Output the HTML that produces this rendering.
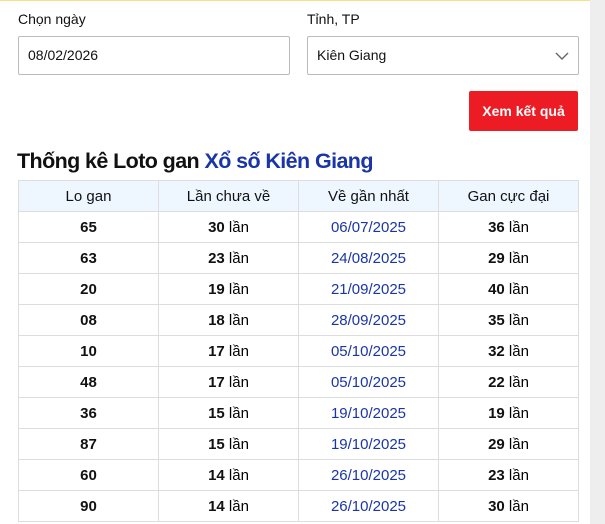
<!DOCTYPE html><html><head><meta charset="utf-8"><style>
body{margin:0;width:605px;height:523px;background:#eee;font-family:"Liberation Sans",sans-serif;overflow:hidden;position:relative}
.pg{position:absolute;left:0;top:0;width:590px;height:523px;background:#fff;border-top:1px solid #f7e08a}
.lb{position:absolute;top:10px;font-size:14px;color:#111}
.in{position:absolute;top:35px;height:39px;width:272px;border:1px solid #bbb;border-radius:2px;box-sizing:border-box;font-size:14px;line-height:37px;padding-left:9px;color:#111}
.btn{position:absolute;left:469px;top:90px;width:109px;height:40px;background:#ed1c24;color:#fff;font-weight:bold;font-size:14px;text-align:center;line-height:40px;border-radius:2px}
h2{position:absolute;left:17px;top:148px;margin:0;font-size:21.5px;letter-spacing:-0.6px;color:#111}
h2 span{color:#1a35a8}
table{position:absolute;left:18px;top:179px;border-collapse:collapse;width:561px;font-size:15px}
td,th{border:1px solid #ddd;height:30px;padding:0;text-align:center;width:25%}
th{background:#eef6ff;font-weight:normal;color:#111;font-size:15px}
td b{color:#111}
td.d{color:#1a35a8}
</style></head><body><div class="pg">
<div class="lb" style="left:18px">Chọn ngày</div>
<div class="lb" style="left:307px">Tỉnh, TP</div>
<div class="in" style="left:18px">08/02/2026</div>
<div class="in" style="left:307px">Kiên Giang
<svg style="position:absolute;right:9px;top:15px" width="14" height="9" viewBox="0 0 14 9"><path d="M1 1L7 7L13 1" fill="none" stroke="#666" stroke-width="1.4"/></svg></div>
<div class="btn">Xem kết quả</div>
<h2>Thống kê Loto gan <span>Xổ số Kiên Giang</span></h2>
<table>
<tr><th>Lo gan</th><th>Lần chưa về</th><th>Về gần nhất</th><th>Gan cực đại</th></tr>
<tr><td><b>65</b></td><td><b>30</b> lần</td><td class="d">06/07/2025</td><td><b>36</b> lần</td></tr>
<tr><td><b>63</b></td><td><b>23</b> lần</td><td class="d">24/08/2025</td><td><b>29</b> lần</td></tr>
<tr><td><b>20</b></td><td><b>19</b> lần</td><td class="d">21/09/2025</td><td><b>40</b> lần</td></tr>
<tr><td><b>08</b></td><td><b>18</b> lần</td><td class="d">28/09/2025</td><td><b>35</b> lần</td></tr>
<tr><td><b>10</b></td><td><b>17</b> lần</td><td class="d">05/10/2025</td><td><b>32</b> lần</td></tr>
<tr><td><b>48</b></td><td><b>17</b> lần</td><td class="d">05/10/2025</td><td><b>22</b> lần</td></tr>
<tr><td><b>36</b></td><td><b>15</b> lần</td><td class="d">19/10/2025</td><td><b>19</b> lần</td></tr>
<tr><td><b>87</b></td><td><b>15</b> lần</td><td class="d">19/10/2025</td><td><b>29</b> lần</td></tr>
<tr><td><b>60</b></td><td><b>14</b> lần</td><td class="d">26/10/2025</td><td><b>23</b> lần</td></tr>
<tr><td><b>90</b></td><td><b>14</b> lần</td><td class="d">26/10/2025</td><td><b>30</b> lần</td></tr>
</table>
</div></body></html>
